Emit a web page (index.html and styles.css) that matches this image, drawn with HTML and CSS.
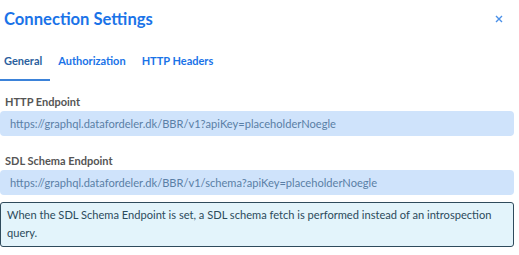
FILE: index.html
```html
<!DOCTYPE html>
<html>
<head>
    <title>Connection Settings</title>
    <link rel="stylesheet" href="styles.css">
</head>
<body>
    <div class="dialog">
        <div class="header">
            <h1>Connection Settings</h1>
            <button class="close" aria-label="Close">
                <svg width="8" height="8" viewBox="0 0 8 8"><path d="M1 1L7 7M7 1L1 7" stroke="#4a90e8" stroke-width="1.4" fill="none"/></svg>
            </button>
        </div>

        <div class="tabs">
            <div class="tab active">General</div>
            <div class="tab">Authorization</div>
            <div class="tab">HTTP Headers</div>
        </div>

        <div class="field first">
            <label>HTTP Endpoint</label>
            <div class="input">https://graphql.datafordeler.dk/BBR/v1?apiKey=placeholderNoegle</div>
        </div>

        <div class="field">
            <label>SDL Schema Endpoint</label>
            <div class="input">https://graphql.datafordeler.dk/BBR/v1/schema?apiKey=placeholderNoegle</div>
        </div>

        <div class="note">When the SDL Schema Endpoint is set, a SDL schema fetch is performed instead of an introspection query.</div>
    </div>
</body>
</html>
```

FILE: styles.css
```css
body {
    margin: 0;
    background: white;
    font-family: Lato, Arial, sans-serif;
}
.dialog {
    width: 514px;
    padding-top: 8px;
}
.header {
    display: flex;
    justify-content: space-between;
    align-items: center;
    height: 22px;
}
h1 {
    margin: 0 0 0 4px;
    font-size: 16.6px;
    font-weight: 700;
    color: #1a73e8;
}
.close {
    border: none;
    background: none;
    padding: 0;
    margin-right: 11px;
    width: 8px;
    height: 8px;
    display: flex;
}
.tabs {
    display: flex;
    margin-top: 22px;
}
.tab {
    padding: 2px 8px 12px;
    font-size: 11px;
    font-weight: 700;
    color: #1a73e8;
}
.tab:first-child {
    padding-left: 4px;
}
.tab.active {
    color: #2b5f9e;
    border-bottom: 2px solid #3b82d9;
}
.field {
    margin-top: 18px;
}
.field.first {
    margin-top: 14px;
}
label {
    display: block;
    margin-left: 5px;
    font-size: 11px;
    font-weight: 700;
    color: #555;
    margin-bottom: 3px;
}
.input {
    height: 25px;
    line-height: 25px;
    padding-left: 10px;
    background: #cfe3fb;
    border-radius: 4px;
    font-size: 11.1px;
    color: #5a7fa6;
}
.note {
    margin-top: 7px;
    padding: 3px 6px 4px;
    border: 1px solid #2f4b5c;
    border-radius: 3px;
    background: #e3f4fb;
    font-size: 11.1px;
    line-height: 18px;
    color: #2c4b5b;
}
```
